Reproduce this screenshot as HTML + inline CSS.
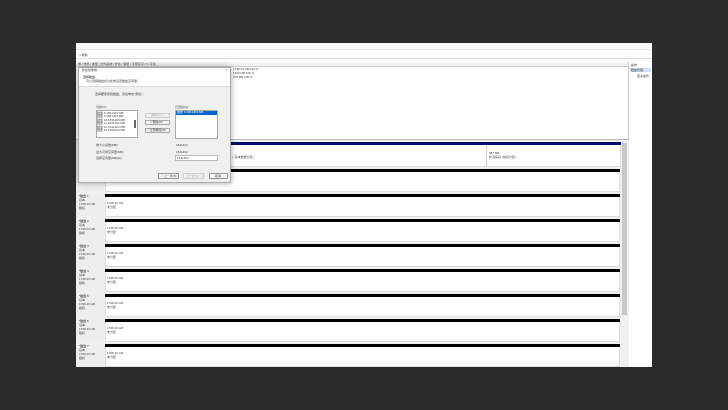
<!DOCTYPE html><html><head><meta charset="utf-8"><style>
*{margin:0;padding:0;box-sizing:border-box}
body{width:728px;height:410px;background:#2b2b2b;position:relative;overflow:hidden;font-family:"Liberation Sans","Noto Sans CJK SC",sans-serif;font-size:3px;color:#333}
div{position:absolute}
.t{font-size:3px;line-height:3px;white-space:nowrap;color:#444}
</style></head><body>
<div style="left:76px;top:43px;width:576px;height:324px;background:#fff"></div>
<div style="left:76px;top:43px;width:576px;height:7px;background:#f7f7f7;border-bottom:1px solid #e4e4e4"></div>
<div style="left:76px;top:52px;width:576px;height:7px;background:#fff;border-bottom:1px solid #e0e0e0"></div>
<div class="t" style="left:79px;top:54px">□ 帮助</div>
<div style="left:76px;top:62px;width:553px;height:5px;background:#f3f3f3;border-bottom:1px solid #ccc"></div>
<div class="t" style="left:78px;top:63px">卷 | 布局 | 类型 | 文件系统 | 状态 | 容量 | 可用空间 | % 可用</div>
<div class="t" style="left:233px;top:68px">1798.04 GB  100 %</div>
<div class="t" style="left:233px;top:72px">1303 MB   100 %</div>
<div class="t" style="left:233px;top:76px">100 MB    100 %</div>
<div style="left:628px;top:62px;width:1px;height:305px;background:#ccc"></div>
<div class="t" style="left:631px;top:64px">操作</div>
<div style="left:630px;top:68px;width:21px;height:4px;background:#cfe0f3"></div>
<div class="t" style="left:631px;top:69px">磁盘管理</div>
<div class="t" style="left:637px;top:75px">更多操作</div>
<div style="left:76px;top:139px;width:553px;height:1px;background:#bbb"></div>
<div style="left:76px;top:140px;width:553px;height:227px;background:#f0f0f0"></div>
<div style="left:622px;top:143px;width:5px;height:172px;background:#c8c8c8"></div>
<!-- disk 0 -->
<div style="left:76px;top:142px;width:28px;height:25px;background:#eee"></div>
<div style="left:105px;top:142px;width:516px;height:25px;background:#fff;border:1px solid #ddd"></div>
<div style="left:105px;top:142px;width:516px;height:3px;background:#0a0a6e"></div>
<div style="left:486px;top:145px;width:1px;height:21px;background:#ccc"></div>
<div class="t" style="left:489px;top:152px">587 MB</div>
<div class="t" style="left:489px;top:156px">状况良好 (恢复分区)</div>
<div class="t" style="left:232px;top:156px">), 基本数据分区)</div>
<!-- disks -->
<div style="left:76px;top:168px;width:545px;height:199px;background:
repeating-linear-gradient(#f0f0f0 0 1px,transparent 1px 25px)"></div>
<div id="rows"></div>
<script>
var h='';var ys=[168,193,218,243,268,293,318,343];
for(var i=0;i<ys.length;i++){var y=ys[i];
h+='<div style="left:76px;top:'+(y+1)+'px;width:28px;height:23px;background:#eee"></div>';
h+='<div style="left:105px;top:'+(y+1)+'px;width:515px;height:23px;background:#fff;border:1px solid #ddd"></div>';
h+='<div style="left:105px;top:'+(y+1)+'px;width:515px;height:3px;background:#000"></div>';
if(i>0){h+='<div class="t" style="left:79px;top:'+(y+2)+'px;color:#111">*磁盘 '+i+'</div>';
h+='<div class="t" style="left:79px;top:'+(y+6)+'px">基本</div>';
h+='<div class="t" style="left:79px;top:'+(y+10)+'px">1798.40 GB</div>';
h+='<div class="t" style="left:79px;top:'+(y+14)+'px">脱机</div>';
h+='<div class="t" style="left:107px;top:'+(y+9)+'px">1798.40 GB</div>';
h+='<div class="t" style="left:107px;top:'+(y+13)+'px">未分配</div>';}}
document.getElementById('rows').outerHTML=h;
</script>
<!-- dialog -->
<div style="left:78px;top:67px;width:153px;height:116px;background:#f0f0f0;border:1px solid #aaa;box-shadow:0 0 6px rgba(0,0,0,.35)"></div>
<div style="left:79px;top:68px;width:151px;height:6px;background:#fff"></div>
<div class="t" style="left:82px;top:69px">新建镜像卷</div>
<div class="t" style="left:225px;top:69px">×</div>
<div style="left:79px;top:74px;width:151px;height:13px;background:#fff;border-bottom:1px solid #ddd"></div>
<div class="t" style="left:83px;top:76px;color:#111">选择磁盘</div>
<div class="t" style="left:86px;top:80px">可以选择磁盘并为此卷设置磁盘空间量。</div>
<div class="t" style="left:95px;top:93px">选择要使用的磁盘，然后单击"添加"。</div>
<div class="t" style="left:96px;top:106px">可用(V):</div>
<div style="left:96px;top:110px;width:42px;height:28px;background:#fff;border:1px solid #aaa"></div>
<div class="t" style="left:97px;top:112px;line-height:3.4px">磁盘 8  1841403 MB<br>磁盘 9  1841403 MB<br>磁盘 10  1841403 MB<br>磁盘 11  1841403 MB<br>磁盘 12  1841403 MB<br>磁盘 13  1841403 MB</div>
<div style="left:134px;top:120px;width:2px;height:8px;background:#666"></div>
<div style="left:145px;top:113px;width:25px;height:5px;border:1px solid #ccc;background:#f0f0f0"></div>
<div class="t" style="left:151px;top:114px;color:#aaa">添加(A) &gt;</div>
<div style="left:145px;top:120px;width:25px;height:5px;border:1px solid #aaa;background:#f5f5f5"></div>
<div class="t" style="left:150px;top:121px">&lt; 删除(R)</div>
<div style="left:145px;top:128px;width:25px;height:5px;border:1px solid #aaa;background:#f5f5f5"></div>
<div class="t" style="left:147px;top:129px">&lt; 全部删除(M)</div>
<div class="t" style="left:175px;top:106px">已选的(S):</div>
<div style="left:175px;top:110px;width:43px;height:29px;background:#fff;border:1px solid #aaa"></div>
<div style="left:176px;top:111px;width:41px;height:4px;background:#0a64c8"></div>
<div class="t" style="left:177px;top:111px;color:#fff">磁盘 0   1841403 MB</div>
<div class="t" style="left:96px;top:144px">卷大小总数(MB):</div>
<div class="t" style="left:96px;top:151px">最大可用空间量(MB):</div>
<div class="t" style="left:96px;top:157px">选择空间量(MB)(E):</div>
<div class="t" style="left:176px;top:144px">1841403</div>
<div class="t" style="left:176px;top:151px">1841403</div>
<div style="left:175px;top:155px;width:43px;height:6px;background:#fff;border:1px solid #bbb"></div>
<div class="t" style="left:177px;top:157px">1841403</div>
<div style="left:158px;top:173px;width:21px;height:6px;border:1px solid #999;background:#f5f5f5"></div>
<div class="t" style="left:161px;top:175px">&lt; 上一步(B)</div>
<div style="left:183px;top:173px;width:21px;height:6px;border:1px solid #ccc;background:#f0f0f0"></div>
<div class="t" style="left:186px;top:175px;color:#aaa">下一步(N) &gt;</div>
<div style="left:209px;top:173px;width:19px;height:6px;border:1px solid #999;background:#f5f5f5"></div>
<div class="t" style="left:215px;top:175px">取消</div>
</body></html>
